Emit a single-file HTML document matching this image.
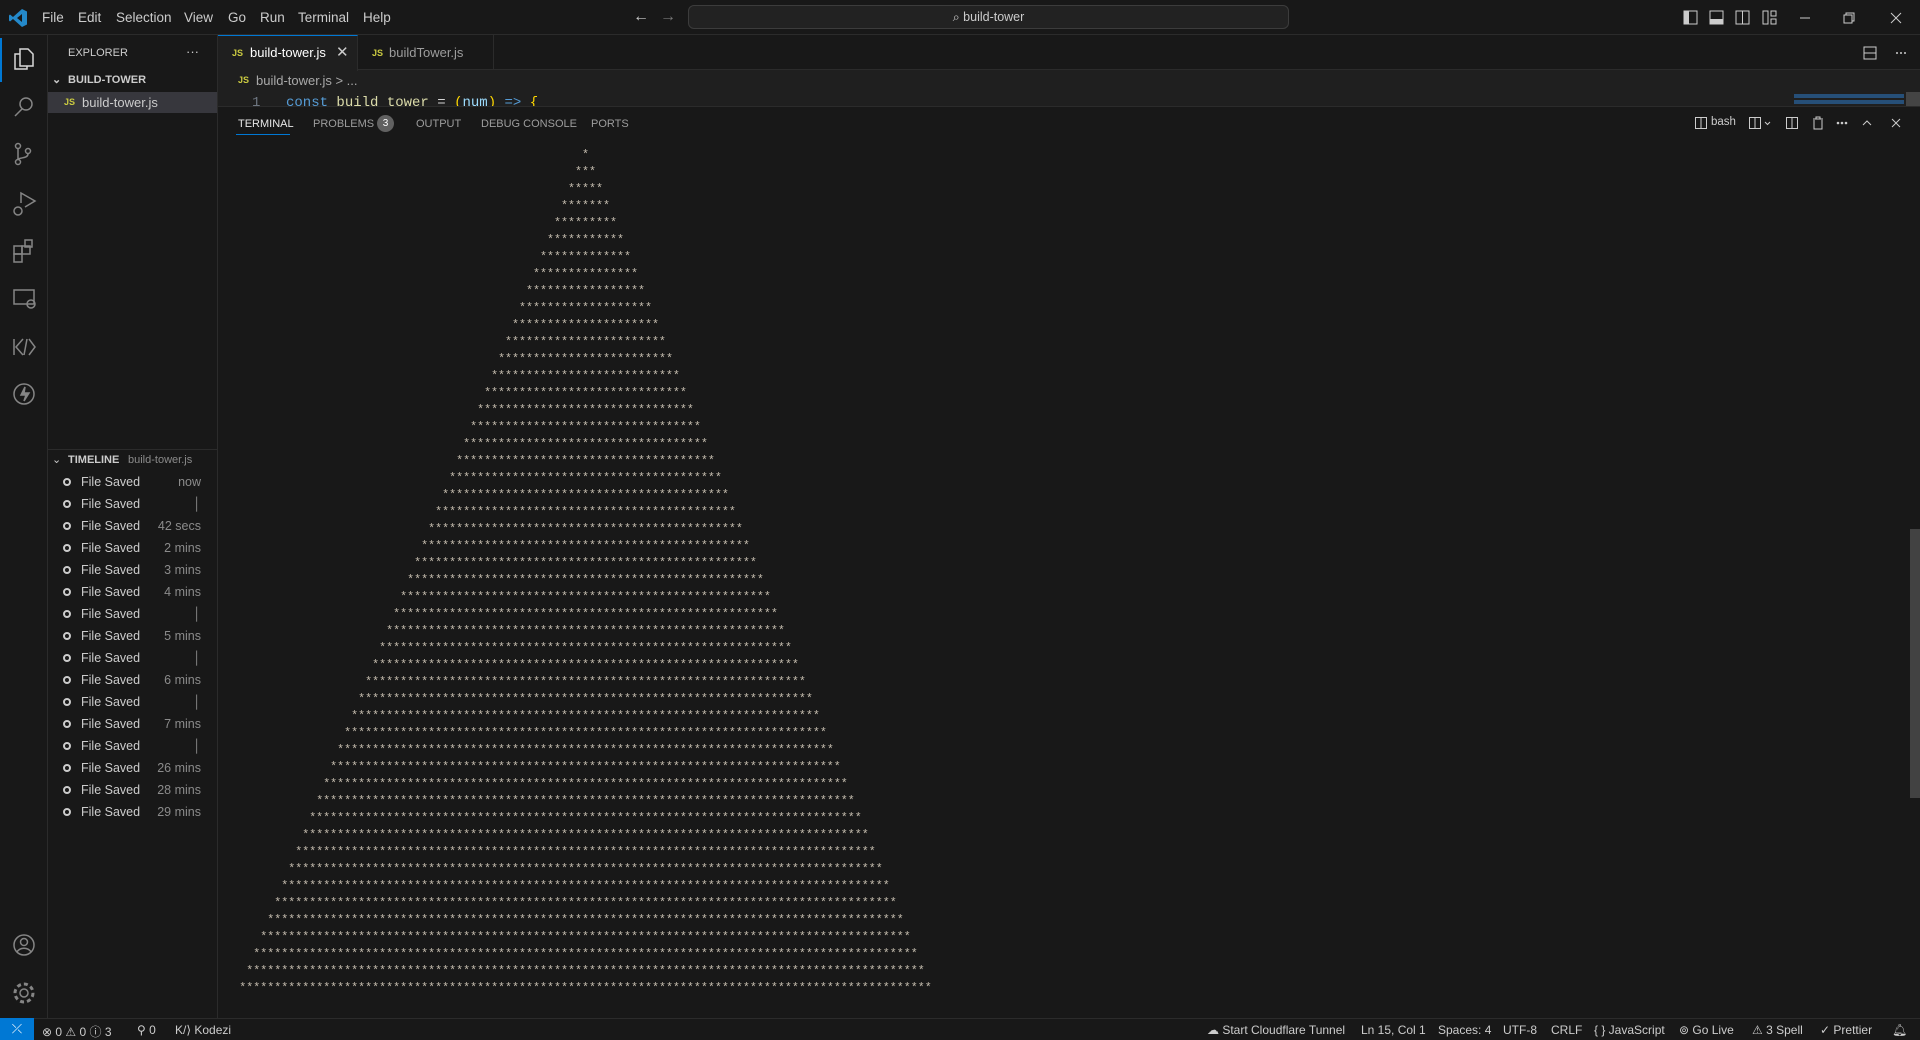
<!DOCTYPE html>
<html><head><meta charset="utf-8"><style>
*{margin:0;padding:0;box-sizing:border-box}
body{width:1920px;height:1040px;background:#181818;font-family:"Liberation Sans",sans-serif;color:#ccc;position:relative;overflow:hidden;font-size:13px}
.a{position:absolute}
.title{left:0;top:0;width:1920px;height:35px;background:#181818;border-bottom:1px solid #2b2b2b}
.menu span{position:absolute;top:10px;font-size:13.5px;color:#ccc}
.act{left:0;top:35px;width:48px;height:983px;background:#181818;border-right:1px solid #2b2b2b}
.side{left:48px;top:35px;width:170px;height:983px;background:#181818;border-right:1px solid #2b2b2b}
.ed{left:218px;top:35px;width:1702px;height:71px;background:#1f1f1f}
.tabs{left:218px;top:35px;width:1702px;height:35px;background:#181818;border-bottom:1px solid #2b2b2b}
.panel{left:218px;top:106px;width:1702px;height:912px;background:#181818;border-top:1px solid #2b2b2b}
.status{left:0;top:1018px;width:1920px;height:22px;background:#181818;border-top:1px solid #2b2b2b;font-size:12px;color:#ccc}
.status span{position:absolute;top:4px}
.tl{position:absolute;left:64px;font-size:12.5px;color:#ccc}
.tl i{position:absolute;left:-1px;top:3px;width:8px;height:8px;border:2px solid #ccc;border-radius:50%}
.tl b{font-weight:normal;position:absolute;left:17px;white-space:nowrap}
.tl em{font-style:normal;position:absolute;left:80px;width:57px;text-align:right;color:#8b8b8b;white-space:nowrap}
.pt{position:absolute;top:118px;font-size:11px;color:#9d9d9d}
pre{position:absolute;left:239px;top:147px;width:693px;text-align:center;font-family:"Liberation Mono",monospace;font-size:11.67px;line-height:17px;color:#c4bcae}
svg{position:absolute}
</style></head><body>
<div class="a title"></div>
<svg style="left:8px;top:8px" width="20" height="20" viewBox="0 0 20 20"><path d="M14 1 L19 3.5 V16.5 L14 19 L5 11 L2 13.5 L1 12.5 V7.5 L2 6.5 L5 9 Z M14 6 L9 10 L14 14 Z" fill="#2489ca"/></svg>
<div class="menu"><span style="left:42px">File</span><span style="left:78px">Edit</span><span style="left:116px">Selection</span><span style="left:184px">View</span><span style="left:228px">Go</span><span style="left:260px">Run</span><span style="left:298px">Terminal</span><span style="left:363px">Help</span></div>
<div class="a" style="left:633px;top:8px;color:#ccc;font-size:16px">←</div>
<div class="a" style="left:660px;top:8px;color:#777;font-size:16px">→</div>
<div class="a" style="left:688px;top:5px;width:601px;height:24px;background:#222;border:1px solid #3c3c3c;border-radius:6px;text-align:center;font-size:12.5px;line-height:22px;color:#ccc">⌕ build-tower</div>
<svg style="left:1683px;top:10px" width="110" height="16"><rect x="1" y="1" width="13" height="13" fill="none" stroke="#ccc"/><rect x="1" y="1" width="5" height="13" fill="#ccc"/><rect x="27" y="1" width="13" height="13" fill="none" stroke="#ccc"/><rect x="27" y="9" width="13" height="5" fill="#ccc"/><rect x="53" y="1" width="13" height="13" fill="none" stroke="#ccc"/><line x1="59.5" y1="1" x2="59.5" y2="14" stroke="#ccc"/><rect x="80" y="1" width="5" height="13" fill="none" stroke="#ccc"/><rect x="88" y="1" width="5" height="5" fill="none" stroke="#ccc"/><rect x="88" y="9" width="5" height="5" fill="none" stroke="#ccc"/></svg>
<svg style="left:1798px;top:10px" width="120" height="16"><line x1="2" y1="8" x2="12" y2="8" stroke="#ccc"/><rect x="46" y="5" width="8" height="8" fill="none" stroke="#ccc"/><path d="M48 5V3h8v8h-2" fill="none" stroke="#ccc"/><path d="M93 3l10 10M103 3l-10 10" stroke="#ccc"/></svg>

<div class="a act"></div>
<div class="a" style="left:0;top:38px;width:2px;height:44px;background:#0078d4"></div>
<svg style="left:12px;top:45px" width="26" height="370" fill="none" stroke="#858585" stroke-width="1.5">
<path d="M8 4h8l5 5v12h-13z" stroke="#d7d7d7"/><path d="M8 9H3v15h12v-3" stroke="#d7d7d7"/>
<circle cx="14" cy="59" r="6"/><path d="M10 64l-7 7"/>
<circle cx="6" cy="101" r="2.5"/><circle cx="6" cy="117" r="2.5"/><circle cx="16" cy="106" r="2.5"/><path d="M6 104v10M16 109c0 5-10 3-10 6"/>
<path d="M9 158v-10l14 8-10 6"/><circle cx="6" cy="166" r="4"/>
<rect x="2" y="201" width="8" height="8"/><rect x="10" y="201" width="8" height="8"/><rect x="2" y="209" width="8" height="8"/><rect x="13" y="195" width="7" height="7"/>
<rect x="2" y="245" width="20" height="14"/><circle cx="19" cy="259" r="4"/>
<path d="M2 294v16M11 294l-7 8 7 8M15 294l-3 16M17 294l6 8-6 8"/>
<circle cx="12" cy="349" r="10"/><path d="M13 342l-4 8h5l-2 6 5-8h-5z" fill="#858585"/>
</svg>
<svg style="left:12px;top:933px" width="26" height="75" fill="none" stroke="#858585" stroke-width="1.5"><circle cx="12" cy="12" r="10"/><circle cx="12" cy="9" r="3.5"/><path d="M5 19c3-5 11-5 14 0"/><circle cx="12" cy="60" r="4"/><circle cx="12" cy="60" r="9" stroke-dasharray="4 3" stroke-width="3"/></svg>

<div class="a side"></div>
<div class="a" style="left:68px;top:47px;font-size:11px;color:#ccc">EXPLORER</div>
<div class="a" style="left:186px;top:44px;font-size:13px;color:#ccc">···</div>
<div class="a" style="left:52px;top:73px;font-size:11px;color:#ccc;font-weight:bold">⌄</div>
<div class="a" style="left:68px;top:74px;font-size:11px;color:#ccc;font-weight:bold">BUILD-TOWER</div>
<div class="a" style="left:48px;top:92px;width:169px;height:21px;background:#37373d"></div>
<div class="a" style="left:64px;top:97px;font-size:9px;color:#cbcb41;font-weight:bold">JS</div>
<div class="a" style="left:82px;top:95px;font-size:13px;color:#ccc">build-tower.js</div>
<div class="a" style="left:48px;top:449px;width:169px;height:1px;background:#2b2b2b"></div>
<div class="a" style="left:52px;top:453px;font-size:11px;color:#ccc">⌄</div>
<div class="a" style="left:68px;top:454px;font-size:11px;color:#ccc;font-weight:bold">TIMELINE</div>
<div class="a" style="left:128px;top:454px;font-size:11px;color:#8b8b8b">build-tower.js</div>
<div class="tl" style="top:475px"><i></i><b>File Saved</b><em>now</em></div>
<div class="tl" style="top:497px"><i></i><b>File Saved</b><em>│</em></div>
<div class="tl" style="top:519px"><i></i><b>File Saved</b><em>42 secs</em></div>
<div class="tl" style="top:541px"><i></i><b>File Saved</b><em>2 mins</em></div>
<div class="tl" style="top:563px"><i></i><b>File Saved</b><em>3 mins</em></div>
<div class="tl" style="top:585px"><i></i><b>File Saved</b><em>4 mins</em></div>
<div class="tl" style="top:607px"><i></i><b>File Saved</b><em>│</em></div>
<div class="tl" style="top:629px"><i></i><b>File Saved</b><em>5 mins</em></div>
<div class="tl" style="top:651px"><i></i><b>File Saved</b><em>│</em></div>
<div class="tl" style="top:673px"><i></i><b>File Saved</b><em>6 mins</em></div>
<div class="tl" style="top:695px"><i></i><b>File Saved</b><em>│</em></div>
<div class="tl" style="top:717px"><i></i><b>File Saved</b><em>7 mins</em></div>
<div class="tl" style="top:739px"><i></i><b>File Saved</b><em>│</em></div>
<div class="tl" style="top:761px"><i></i><b>File Saved</b><em>26 mins</em></div>
<div class="tl" style="top:783px"><i></i><b>File Saved</b><em>28 mins</em></div>
<div class="tl" style="top:805px"><i></i><b>File Saved</b><em>29 mins</em></div>

<div class="a ed"></div>
<div class="a" style="left:252px;top:95px;font-family:'Liberation Mono',monospace;font-size:14px;color:#6e7681">1</div>
<div class="a" style="left:286px;top:95px;font-family:'Liberation Mono',monospace;font-size:14px;color:#9cdcfe;white-space:pre"><span style="color:#569cd6">const</span> <span style="color:#dcdcaa">build_tower</span> <span style="color:#d4d4d4">=</span> <span style="color:#ffd700">(</span>num<span style="color:#ffd700">)</span> <span style="color:#569cd6">=&gt;</span> <span style="color:#ffd700">{</span></div>
<div class="a tabs"></div>
<div class="a" style="left:218px;top:35px;width:140px;height:36px;background:#1f1f1f;border-top:1px solid #0078d4;border-right:1px solid #2b2b2b"></div>
<div class="a" style="left:232px;top:48px;font-size:9px;color:#cbcb41;font-weight:bold">JS</div>
<div class="a" style="left:250px;top:45px;font-size:13px;color:#fff">build-tower.js</div>
<div class="a" style="left:336px;top:43px;font-size:15px;color:#ccc">✕</div>
<div class="a" style="left:358px;top:35px;width:136px;height:35px;border-right:1px solid #2b2b2b"></div>
<div class="a" style="left:372px;top:48px;font-size:9px;color:#cbcb41;font-weight:bold">JS</div>
<div class="a" style="left:389px;top:45px;font-size:13px;color:#9d9d9d">buildTower.js</div>
<svg style="left:1862px;top:45px" width="56" height="16"><rect x="2" y="2" width="12" height="12" fill="none" stroke="#ccc"/><line x1="2" y1="8" x2="14" y2="8" stroke="#ccc"/><circle cx="35" cy="8" r="1" fill="#ccc"/><circle cx="39" cy="8" r="1" fill="#ccc"/><circle cx="43" cy="8" r="1" fill="#ccc"/></svg>
<div class="a" style="left:238px;top:75px;font-size:9px;color:#cbcb41;font-weight:bold">JS</div>
<div class="a" style="left:256px;top:73px;font-size:13px;color:#a9a9a9">build-tower.js &gt; ...</div>
<div class="a" style="left:1794px;top:94px;width:110px;height:4px;background:#264f78"></div>
<div class="a" style="left:1794px;top:100px;width:110px;height:4px;background:#264f78"></div>
<div class="a" style="left:1906px;top:92px;width:14px;height:14px;background:#444"></div>

<div class="a panel"></div>
<div class="pt" style="left:238px;color:#e7e7e7">TERMINAL</div>
<div class="a" style="left:236px;top:134px;width:54px;height:1px;background:#0078d4"></div>
<div class="pt" style="left:313px">PROBLEMS</div>
<div class="a" style="left:377px;top:115px;width:17px;height:17px;border-radius:50%;background:#616161;color:#fff;font-size:10px;text-align:center;line-height:17px">3</div>
<div class="pt" style="left:416px">OUTPUT</div>
<div class="pt" style="left:481px">DEBUG CONSOLE</div>
<div class="pt" style="left:591px">PORTS</div>
<svg style="left:1693px;top:115px" width="210" height="16" fill="none" stroke="#ccc"><rect x="2.5" y="2.5" width="11" height="11"/><line x1="8" y1="2.5" x2="8" y2="13.5"/><rect x="56.5" y="2.5" width="11" height="11"/><line x1="62" y1="2.5" x2="62" y2="13.5"/><path d="M72 7l2.5 2.5 2.5-2.5"/><rect x="93.5" y="2.5" width="11" height="11"/><line x1="99" y1="2.5" x2="99" y2="13.5"/><path d="M120 4h10M123 4V2h4v2M121 5v9h8V5"/><circle cx="145" cy="8" r=".8" fill="#ccc"/><circle cx="149" cy="8" r=".8" fill="#ccc"/><circle cx="153" cy="8" r=".8" fill="#ccc"/><path d="M170 10l4-4 4 4"/><path d="M199 4l8 8M207 4l-8 8"/></svg>
<div class="a" style="left:1711px;top:116px;font-size:11.5px;color:#ccc">bash</div>
<div class="a" style="left:1910px;top:529px;width:10px;height:269px;background:#424242"></div>
<pre>*
***
*****
*******
*********
***********
*************
***************
*****************
*******************
*********************
***********************
*************************
***************************
*****************************
*******************************
*********************************
***********************************
*************************************
***************************************
*****************************************
*******************************************
*********************************************
***********************************************
*************************************************
***************************************************
*****************************************************
*******************************************************
*********************************************************
***********************************************************
*************************************************************
***************************************************************
*****************************************************************
*******************************************************************
*********************************************************************
***********************************************************************
*************************************************************************
***************************************************************************
*****************************************************************************
*******************************************************************************
*********************************************************************************
***********************************************************************************
*************************************************************************************
***************************************************************************************
*****************************************************************************************
*******************************************************************************************
*********************************************************************************************
***********************************************************************************************
*************************************************************************************************
***************************************************************************************************</pre>

<div class="a status">
<div class="a" style="left:0;top:-1px;width:34px;height:22px;background:#0078d4;color:#fff;text-align:center;font-size:13px;line-height:21px">⤫</div>
<span style="left:42px">⊗ 0 ⚠ 0 ⓘ 3</span>
<span style="left:137px">⚲ 0</span>
<span style="left:175px">K/⟩ Kodezi</span>
<span style="left:1207px">☁ Start Cloudflare Tunnel</span>
<span style="left:1361px">Ln 15, Col 1</span>
<span style="left:1438px">Spaces: 4</span>
<span style="left:1503px">UTF-8</span>
<span style="left:1551px">CRLF</span>
<span style="left:1594px">{ } JavaScript</span>
<span style="left:1679px">⊚ Go Live</span>
<span style="left:1752px">⚠ 3 Spell</span>
<span style="left:1820px">✓ Prettier</span>
<span style="left:1892px">🔔︎</span>
</div>
</body></html>
